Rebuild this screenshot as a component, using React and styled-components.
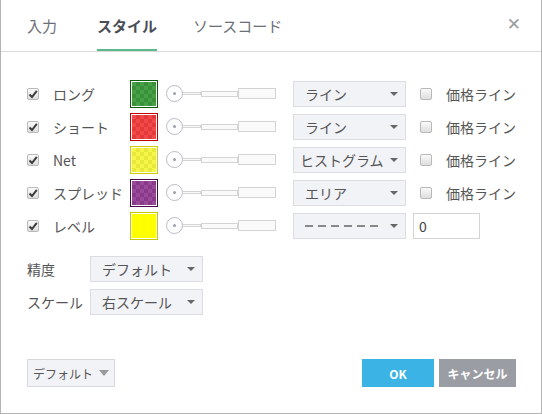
import React from 'react';
import styled, { createGlobalStyle, css } from 'styled-components';

const Global = createGlobalStyle`
  html, body { margin: 0; padding: 0; background: #fff; }
  body { font-family: "Noto Sans CJK JP", "Noto Sans", sans-serif; }
`;

const Win = styled.div`
  width: 542px;
  height: 414px;
  box-sizing: border-box;
  border: 1px solid #b4b4b4;
  border-top: none;
  background: #fff;
  display: flex;
  flex-direction: column;
  color: #555;
  font-size: 14px;
`;

const Header = styled.div`
  height: 52px;
  box-sizing: border-box;
  border-bottom: 1px solid #dadada;
  display: flex;
  align-items: stretch;
  padding-left: 26px;
  position: relative;
`;

const Tab = styled.div`
  display: flex;
  align-items: center;
  margin-right: ${p => p.gap}px;
  font-size: 15px;
  color: #6c6f78;
  box-sizing: border-box;
  padding-top: 2px;
  border-bottom: 2px solid transparent;
  ${p => p.active && css`
    font-weight: 700;
    color: #4a4e57;
    border-bottom-color: #5ab88a;
  `}
`;

const Close = styled.div`
  position: absolute;
  right: 20px;
  top: 14px;
  font-size: 17px;
  color: #9a9ca3;
  font-family: "DejaVu Sans", sans-serif;
`;

const Body = styled.div`
  padding: 25px 0 0 26px;
  display: flex;
  flex-direction: column;
  flex: 1;
`;

const Row = styled.div`
  display: flex;
  align-items: center;
  height: 33px;
`;

const Check = styled.span`
  width: 12px;
  height: 12px;
  box-sizing: border-box;
  border: 1px solid #b9b9b9;
  border-radius: 2px;
  background: linear-gradient(#fafafa, #dedede);
  display: inline-flex;
  align-items: center;
  justify-content: center;
  flex: none;
  svg { display: block; }
`;

const Label = styled.span`
  width: ${p => p.w}px;
  margin-left: 14px;
  flex: none;
  font-size: 14px;
  color: #555;
  white-space: nowrap;
`;

const Swatch = styled.div`
  width: 28px;
  height: 28px;
  box-sizing: border-box;
  border: 1px solid ${p => p.edge};
  padding: 1px;
  flex: none;
  margin-right: 8px;
  span {
    display: block;
    width: 100%;
    height: 100%;
    background-color: ${p => p.fill};
    ${p => p.shade && css`
      background-image: repeating-conic-gradient(${p.shade} 0 25%, transparent 0 50%);
      background-size: 8px 8px;
    `}
  }
`;

const Slider = styled.div`
  display: flex;
  align-items: center;
  width: 112px;
  flex: none;
  margin-right: 15px;
`;

const Knob = styled.div`
  width: 17px;
  height: 17px;
  box-sizing: border-box;
  border: 1px solid #b8bcc6;
  border-radius: 50%;
  background: #fff;
  display: flex;
  align-items: center;
  justify-content: center;
  flex: none;
  &::after {
    content: "";
    width: 3px;
    height: 3px;
    border-radius: 50%;
    background: #9aa0ac;
  }
`;

const Track = styled.div`
  height: ${p => p.h}px;
  width: ${p => p.w}px;
  box-sizing: border-box;
  border: 1px solid #d4d4d4;
  border-left: ${p => (p.first ? 'none' : '1px solid #d4d4d4')};
  background: #fafafa;
  flex: none;
`;

const Select = styled.div`
  width: ${p => p.w}px;
  height: 26px;
  box-sizing: border-box;
  border: 1px solid #dcdde2;
  background: #f2f3f7;
  display: flex;
  align-items: center;
  padding: 0 7px 0 ${p => p.pl || 11}px;
  font-size: 14px;
  color: #555;
  flex: none;
  span { flex: 1; white-space: nowrap; overflow: hidden; }
  &::after {
    content: "";
    border-left: 4px solid transparent;
    border-right: 4px solid transparent;
    border-top: 4px solid #666;
    margin-left: 3px;
    flex: none;
  }
`;

const Dashes = styled.div`
  flex: 1;
  display: flex;
  gap: 5px;
  i {
    display: block;
    width: 8px;
    height: 2px;
    background: #888;
  }
`;

const Price = styled.div`
  display: flex;
  align-items: center;
  margin-left: 14px;
  gap: 14px;
  font-size: 14px;
  color: #555;
  white-space: nowrap;
`;

const NumInput = styled.div`
  width: 67px;
  height: 26px;
  box-sizing: border-box;
  border: 1px solid #d4d4d4;
  margin-left: 7px;
  display: flex;
  align-items: center;
  padding-left: 5px;
  font-size: 14px;
  color: #444;
`;

const Opts = styled.div`
  margin-top: 14px;
  display: flex;
  flex-direction: column;
  gap: 7px;
`;

const OptRow = styled.div`
  display: flex;
  align-items: center;
`;

const OptLabel = styled.span`
  width: 63px;
  font-size: 14px;
  color: #555;
`;

const Footer = styled.div`
  display: flex;
  align-items: center;
  padding: 0 25px 26px 26px;
`;

const DefBtn = styled.div`
  width: 88px;
  height: 28px;
  box-sizing: border-box;
  border: 1px solid #d8d9de;
  background: #f2f3f7;
  display: flex;
  align-items: center;
  justify-content: center;
  gap: 6px;
  font-size: 12px;
  color: #555;
  &::after {
    content: "";
    border-left: 5px solid transparent;
    border-right: 5px solid transparent;
    border-top: 6px solid #999;
  }
`;

const Btn = styled.div`
  height: 28px;
  width: ${p => p.w}px;
  background: ${p => p.bg};
  color: #fff;
  font-weight: 700;
  font-size: 12px;
  display: flex;
  align-items: center;
  justify-content: center;
  margin-left: ${p => p.ml}px;
`;

const Tick = () => (
  <svg width="10" height="10" viewBox="0 0 10 10">
    <path d="M1.5 5.5 L4 8 L8.8 1.8" fill="none" stroke="#3c3c3c" strokeWidth="2" />
  </svg>
);

const CheckBox = ({ on }) => <Check>{on && <Tick />}</Check>;

const rows = [
  { name: 'ロング', edge: '#0b5a0b', fill: '#46a046', shade: '#3a8f3a', type: 'ライン' },
  { name: 'ショート', edge: '#c20000', fill: '#f24848', shade: '#e23a3a', type: 'ライン' },
  { name: 'Net', edge: '#cccc00', fill: '#f6f64a', shade: '#e8e838', type: 'ヒストグラム', pl: 6 },
  { name: 'スプレッド', edge: '#4a0a4a', fill: '#9a4a9a', shade: '#883a88', type: 'エリア' },
  { name: 'レベル', edge: '#c8c800', fill: '#ffff00', level: true },
];

export default function App() {
  return (
    <Win>
      <Global />
      <Header>
        <Tab gap={40}>入力</Tab>
        <Tab gap={36} active>スタイル</Tab>
        <Tab gap={0}>ソースコード</Tab>
        <Close>✕</Close>
      </Header>
      <Body>
        {rows.map(r => (
          <Row key={r.name}>
            <CheckBox on />
            <Label w={77}>{r.name}</Label>
            <Swatch edge={r.edge} fill={r.fill} shade={r.shade}><span /></Swatch>
            <Slider>
              <Knob />
              <Track first w={18} h={3} />
              <Track w={37} h={6} />
              <Track w={38} h={11} />
            </Slider>
            <Select w={113} pl={r.pl}>
              {r.level ? (
                <Dashes>{[0, 1, 2, 3, 4, 5].map(i => <i key={i} />)}</Dashes>
              ) : (
                <span>{r.type}</span>
              )}
            </Select>
            {r.level ? (
              <NumInput>0</NumInput>
            ) : (
              <Price><CheckBox />価格ライン</Price>
            )}
          </Row>
        ))}
        <Opts>
          <OptRow>
            <OptLabel>精度</OptLabel>
            <Select w={113}><span>デフォルト</span></Select>
          </OptRow>
          <OptRow>
            <OptLabel>スケール</OptLabel>
            <Select w={113}><span>右スケール</span></Select>
          </OptRow>
        </Opts>
      </Body>
      <Footer>
        <DefBtn>デフォルト</DefBtn>
        <Btn w={72} bg="#3bb3e4" ml={247}>OK</Btn>
        <Btn w={77} bg="#9b9da4" ml={5}>キャンセル</Btn>
      </Footer>
    </Win>
  );
}
